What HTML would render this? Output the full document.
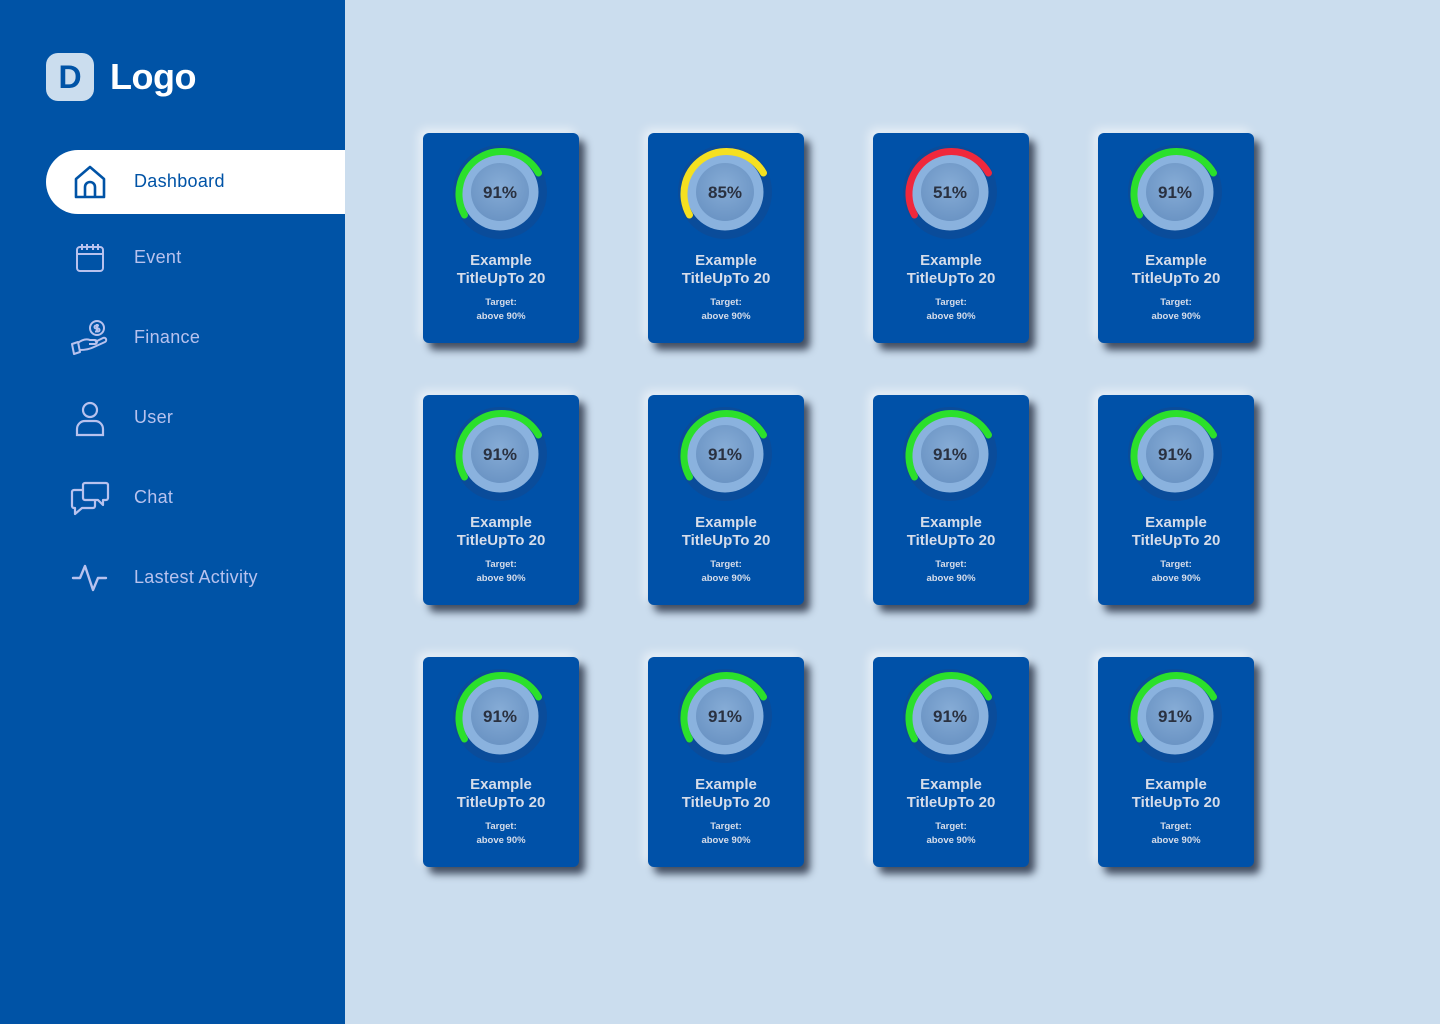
<!DOCTYPE html>
<html><head><meta charset="utf-8"><style>
*{margin:0;padding:0;box-sizing:border-box}
body{width:1440px;height:1024px;background:#CBDDEE;font-family:"Liberation Sans",sans-serif;position:relative;overflow:hidden}
.side{position:absolute;left:0;top:0;width:345px;height:1024px;background:#0053A6}
.logo{position:absolute;left:46px;top:53px;width:48px;height:48px;background:#CBDDEE;border-radius:12px;color:#0053A6;font-weight:bold;font-size:32px;text-align:center;line-height:48px}
.logot{position:absolute;left:110px;top:56px;color:#fff;font-weight:bold;font-size:36px;letter-spacing:-0.5px}
.act{position:absolute;left:46px;top:150px;width:299px;height:64px;background:#fff;border-radius:32px 0 0 32px}
.nav{position:absolute;left:134px;font-size:18px;color:#B8C2EE;letter-spacing:0.3px}
.ico{position:absolute;left:70px;width:40px;height:40px}
.card{position:absolute;width:156px;height:210px;background:#0051A8;border-radius:6px;box-shadow:6px 7px 8px rgba(20,30,50,.75),-4px -4px 10px rgba(255,255,255,.6);text-align:center;color:#D6DDEA}
.card svg{position:absolute;left:25px;top:7px}
.t{position:absolute;left:0;right:0;top:119px;font-weight:bold;font-size:15px;line-height:18px}
.g{position:absolute;left:0;right:0;top:163px;font-weight:bold;font-size:9.5px;line-height:14px}
</style></head><body>
<div class="side">
<div class="logo">D</div><div class="logot">Logo</div>
<div class="act"></div>
<svg class="ico" style="top:162px" viewBox="0 0 40 40" fill="none" stroke="#0053A6" stroke-width="2.6" stroke-linejoin="round"><path d="M6 17 L20 5 L34 17 V35 H6 Z"/><path d="M15 35 V25 a5 5 0 0 1 10 0 V35"/></svg>
<div class="nav" style="top:171px;color:#0053A6">Dashboard</div>
<svg class="ico" style="top:238px" viewBox="0 0 40 40" fill="none" stroke="#B8C2EE" stroke-width="2"><rect x="7" y="9" width="26" height="24" rx="3"/><path d="M7 16 H33 M12 6v6 M17 6v6 M23 6v6 M28 6v6"/></svg>
<div class="nav" style="top:247px">Event</div>
<svg class="ico" style="top:318px" viewBox="0 0 40 40" fill="none" stroke="#B8C2EE" stroke-width="2" stroke-linejoin="round"><circle cx="27" cy="10" r="7"/><path d="M27 6v8 M29 7.5h-3a1.5 1.5 0 0 0 0 3h2a1.5 1.5 0 0 1 0 3h-3"/><path d="M2 26 L8 24 L10 34 L4 36 Z"/><path d="M8 25 q6-5 12-3 h5 a2 2 0 0 1 0 4 h-6 M10 32 q8 0 14-3 l11-5 a2 2 0 0 0-2-4 l-8 4"/></svg>
<div class="nav" style="top:327px">Finance</div>
<svg class="ico" style="top:398px" viewBox="0 0 40 40" fill="none" stroke="#B8C2EE" stroke-width="2.2"><circle cx="20" cy="12" r="7"/><path d="M7 37 V31 a8 8 0 0 1 8-8 h10 a8 8 0 0 1 8 8 V37 Z"/></svg>
<div class="nav" style="top:407px">User</div>
<svg class="ico" style="top:478px" viewBox="0 0 40 40" fill="none" stroke="#B8C2EE" stroke-width="2.2" stroke-linejoin="round"><path d="M15 5 H36 a2 2 0 0 1 2 2 V20 a2 2 0 0 1-2 2 H33 V27 L28 22 H15 a2 2 0 0 1-2-2 V7 a2 2 0 0 1 2-2 Z"/><path d="M13 12 H4 a2 2 0 0 0-2 2 V28 a2 2 0 0 0 2 2 H5 V36 L12 30 H23 a2 2 0 0 0 2-2 V22"/></svg>
<div class="nav" style="top:487px">Chat</div>
<svg class="ico" style="top:558px" viewBox="0 0 40 40" fill="none" stroke="#B8C2EE" stroke-width="2.4" stroke-linecap="round" stroke-linejoin="round"><path d="M3 20 H10 L15 8 L23 32 L28 20 H36"/></svg>
<div class="nav" style="top:567px">Lastest Activity</div>
</div>

<svg width="0" height="0" style="position:absolute"><defs>
<radialGradient id="in" cx="50%" cy="40%" r="60%"><stop offset="0" stop-color="#86ACD6"/><stop offset="1" stop-color="#6B94C4"/></radialGradient>
<g id="gauge"><circle cx="52" cy="52" r="47" fill="#0A4C9A"/><circle cx="52" cy="52" r="38.5" fill="#8AB2DE"/><circle cx="52" cy="52" r="29" fill="url(#in)"/></g>
</defs></svg>

<div id="cards"></div>
<script>
var xs=[423,648,873,1098],ys=[133,395,657],h='';
var vals=[['91%','#2BE02B'],['85%','#F5E020'],['51%','#F0283C']];
for(var r=0;r<3;r++)for(var c=0;c<4;c++){
 var v=(r==0&&c==1)?vals[1]:(r==0&&c==2)?vals[2]:vals[0];
 h+='<div class="card" style="left:'+xs[c]+'px;top:'+ys[r]+'px"><svg width="104" height="104" viewBox="0 0 104 104"><use href="#gauge"/><path d="M16.5 75 A42.5 42.5 0 1 1 90.5 33" fill="none" stroke="'+v[1]+'" stroke-width="7" stroke-linecap="round"/><text x="52" y="58" text-anchor="middle" font-family="Liberation Sans,sans-serif" font-weight="bold" font-size="17" fill="#2A3140">'+v[0]+'</text></svg><div class="t">Example<br>TitleUpTo 20</div><div class="g">Target:<br>above 90%</div></div>';
}
document.getElementById('cards').innerHTML=h;
</script>
</body></html>
